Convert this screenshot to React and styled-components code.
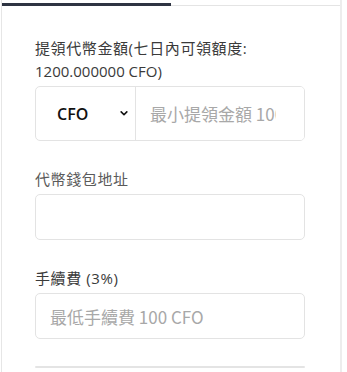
import React from 'react';
import styled, { createGlobalStyle } from 'styled-components';

const GlobalStyle = createGlobalStyle`
  html, body {
    margin: 0;
    padding: 0;
    background: #fff;
  }
  body {
    font-family: "Open Sans", "Noto Sans CJK TC", sans-serif;
    color: #333;
  }
`;

const WithdrawForm = () => {
  return (
    <Card>
      <Tabs>
        <Tab active />
        <Tab />
      </Tabs>
      <Body>
        <Field>
          <Label>
            提領代幣金額(七日內可領額度:<br />
            <Plain>1200.000000 CFO)</Plain>
          </Label>
          <Group>
            <SelectWrap>
              <Select defaultValue="CFO">
                <option value="CFO">CFO</option>
              </Select>
              <Chevron viewBox="0 0 10 6" width="8" height="5">
                <path d="M1.5 1l3.5 3.5L8.5 1" fill="none" stroke="#111" strokeWidth="2" strokeLinecap="round" strokeLinejoin="round" />
              </Chevron>
            </SelectWrap>
            <Input grouped placeholder="最小提領金額 100 CFO" />
          </Group>
        </Field>

        <Field>
          <Label muted>代幣錢包地址</Label>
          <Input />
        </Field>

        <Field>
          <Label>手續費 (3%)</Label>
          <Input placeholder="最低手續費 100 CFO" />
        </Field>

        <Divider />
      </Body>
    </Card>
  );
};

export default function App() {
  return (
    <>
      <GlobalStyle />
      <WithdrawForm />
    </>
  );
}

const Card = styled.div`
  margin-left: 1px;
  width: 341px;
  min-height: 372px;
  box-sizing: border-box;
  border-left: 1px solid #e6e6e6;
  border-right: 2px solid #ededed;
  background: #fff;
`;

const Tabs = styled.div`
  display: flex;
  align-items: flex-end;
  height: 6px;
`;

const Tab = styled.div`
  flex: 1;
  height: ${(p) => (p.active ? '3px' : '1px')};
  background: ${(p) => (p.active ? '#2e3442' : '#e4e4e4')};
`;

const Body = styled.div`
  padding: 31px 35px 0 33px;
`;

const Field = styled.div`
  display: flex;
  flex-direction: column;
  margin-bottom: 27px;
`;

const Label = styled.label`
  font-size: 15px;
  line-height: 23px;
  letter-spacing: 0.6px;
  color: ${(p) => (p.muted ? '#5a5a5a' : '#3a3a3a')};
  margin-bottom: 3px;
`;

const Plain = styled.span`
  letter-spacing: 0;
`;

const Group = styled.div`
  display: flex;
  height: 55px;
  box-sizing: border-box;
  border: 1px solid #e3e3e3;
  border-radius: 5px;
  overflow: hidden;
`;

const SelectWrap = styled.div`
  position: relative;
  width: 99px;
  flex-shrink: 0;
  border-right: 1px solid #e3e3e3;
`;

const Select = styled.select`
  appearance: none;
  -webkit-appearance: none;
  width: 100%;
  height: 100%;
  border: none;
  outline: none;
  background: transparent;
  padding: 0 0 0 21px;
  font-family: "Open Sans", "Noto Sans CJK TC", sans-serif;
  font-size: 16px;
  font-weight: 600;
  color: #111;
`;

const Chevron = styled.svg`
  position: absolute;
  right: 7px;
  top: 24px;
  pointer-events: none;
`;

const Input = styled.input`
  flex: ${(p) => (p.grouped ? '1 1 auto' : '0 0 auto')};
  min-width: 0;
  width: ${(p) => (p.grouped ? 'auto' : '100%')};
  height: ${(p) => (p.grouped ? 'auto' : '46px')};
  box-sizing: border-box;
  border: ${(p) => (p.grouped ? 'none' : '1px solid #e3e3e3')};
  border-radius: ${(p) => (p.grouped ? '0' : '5px')};
  padding: ${(p) => (p.grouped ? '0 28px 0 14px' : '0 14px')};
  outline: none;
  font-family: "Noto Sans CJK TC", "Open Sans", sans-serif;
  font-size: 17px;
  color: #333;
  background: #fff;

  &::placeholder {
    color: #a8a8a8;
  }
`;

const Divider = styled.div`
  height: 2px;
  margin-top: 1px;
  background: #e4e4e4;
  border-radius: 1px;
`;
